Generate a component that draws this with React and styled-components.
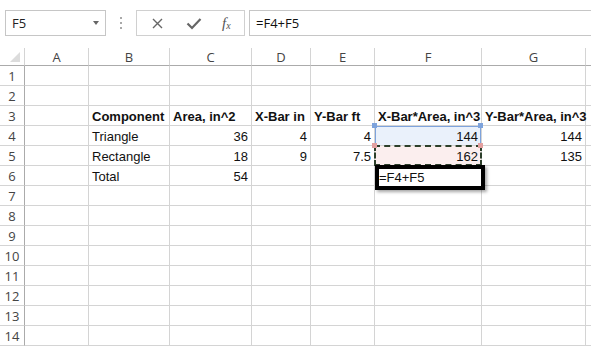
import React from "react";
import styled, { createGlobalStyle } from "styled-components";

const GlobalStyle = createGlobalStyle`
  html, body {
    margin: 0;
    padding: 0;
    background: #ffffff;
    overflow: hidden;
  }
  body {
    font-family: "Liberation Sans", Arial, sans-serif;
  }
`;

const COLS = [64, 81, 82, 59, 64, 107, 104];
const LETTERS = ["A", "B", "C", "D", "E", "F", "G"];

const rows = {
  3: [null, { t: "Component", b: true }, { t: "Area, in^2", b: true }, { t: "X-Bar in", b: true }, { t: "Y-Bar ft", b: true }, { t: "X-Bar*Area, in^3", b: true }, { t: "Y-Bar*Area, in^3", b: true }],
  4: [null, { t: "Triangle" }, { t: "36", r: true }, { t: "4", r: true }, { t: "4", r: true }, { t: "144", r: true, sel: "blue" }, { t: "144", r: true }],
  5: [null, { t: "Rectangle" }, { t: "18", r: true }, { t: "9", r: true }, { t: "7.5", r: true }, { t: "162", r: true, sel: "red" }, { t: "135", r: true }],
  6: [null, { t: "Total" }, { t: "54", r: true }, null, null, { edit: "=F4+F5" }, null],
};

export default function App() {
  const rowNums = Array.from({ length: 14 }, (_, i) => i + 1);
  return (
    <Page>
      <GlobalStyle />
      <FormulaBar>
        <NameBox>
          <span>F5</span>
          <DropArrow />
        </NameBox>
        <Grip>
          <i />
          <i />
          <i />
        </Grip>
        <ButtonBox>
          <BarButton>
            <svg width="13" height="13" viewBox="0 0 13 13">
              <path d="M2 2 L11 11 M11 2 L2 11" stroke="#666" strokeWidth="1.4" fill="none" />
            </svg>
          </BarButton>
          <BarButton>
            <svg width="16" height="13" viewBox="0 0 16 13">
              <path d="M1.5 6.5 L6 11 L14.5 2" stroke="#666" strokeWidth="2.2" fill="none" />
            </svg>
          </BarButton>
          <FxButton>
            f<sub>x</sub>
          </FxButton>
        </ButtonBox>
        <FormulaInput>=F4+F5</FormulaInput>
      </FormulaBar>

      <Sheet>
        <Corner>
          <svg width="10" height="10" viewBox="0 0 10 10">
            <path d="M10 0 L10 10 L0 10 Z" fill="#dcdcdc" />
          </svg>
        </Corner>
        {LETTERS.map((l) => (
          <ColHead key={l}>{l}</ColHead>
        ))}
        <ColHead $last />

        {rowNums.map((n) => (
          <React.Fragment key={n}>
            <RowHead>{n}</RowHead>
            {COLS.map((_, ci) => {
              const c = rows[n] ? rows[n][ci] : null;
              return (
                <Cell key={ci} $bold={c && c.b} $right={c && c.r} $sel={c && c.sel}>
                  {c && c.t}
                  {c && c.sel === "blue" && (
                    <>
                      <Handle $c="#7ea3dc" $top $left />
                      <Handle $c="#7ea3dc" $top />
                    </>
                  )}
                  {c && c.sel === "red" && (
                    <>
                      <Marquee />
                      <Handle $c="#e3a0a0" $top $left />
                      <Handle $c="#e3a0a0" $top />
                    </>
                  )}
                  {c && c.edit && <Editor>{c.edit}</Editor>}
                </Cell>
              );
            })}
            <Cell $last />
          </React.Fragment>
        ))}
      </Sheet>
    </Page>
  );
}

const Page = styled.div`
  width: 591px;
  height: 346px;
  overflow: hidden;
  background: #fff;
`;

const FormulaBar = styled.div`
  display: flex;
  align-items: stretch;
  height: 26px;
  padding: 10px 0 12px 5px;
`;

const NameBox = styled.div`
  width: 101px;
  border: 1px solid #c6c6c6;
  display: flex;
  align-items: center;
  justify-content: space-between;
  padding: 0 6px 0 6px;
  box-sizing: border-box;
  font-family: "Open Sans", "Liberation Sans", sans-serif;
  font-size: 13px;
  color: #222;
`;

const DropArrow = styled.div`
  width: 0;
  height: 0;
  border-left: 3.5px solid transparent;
  border-right: 3.5px solid transparent;
  border-top: 4px solid #666;
`;

const Grip = styled.div`
  width: 30px;
  display: flex;
  flex-direction: column;
  align-items: center;
  justify-content: center;
  gap: 3px;
  i {
    display: block;
    width: 2px;
    height: 2px;
    background: #a9a9a9;
  }
`;

const ButtonBox = styled.div`
  width: 109px;
  border: 1px solid #d0d0d0;
  box-sizing: border-box;
  display: flex;
  align-items: center;
  padding-left: 12px;
  gap: 0;
`;

const BarButton = styled.div`
  width: 33px;
  display: flex;
  align-items: center;
  justify-content: flex-start;
  padding-left: 2px;
`;

const FxButton = styled.div`
  font-family: "Liberation Serif", "Times New Roman", serif;
  font-style: italic;
  font-size: 15px;
  color: #555;
  margin-left: 3px;
  sub {
    font-size: 10px;
    vertical-align: -1px;
  }
`;

const FormulaInput = styled.div`
  flex: 1;
  margin-left: 4px;
  border-top: 1px solid #c6c6c6;
  border-bottom: 1px solid #c6c6c6;
  border-left: 1px solid #c6c6c6;
  display: flex;
  align-items: center;
  padding-left: 6px;
  font-family: "Open Sans", "Liberation Sans", sans-serif;
  font-size: 13px;
  color: #111;
`;

const Sheet = styled.div`
  display: grid;
  grid-template-columns: 25px ${COLS.map((c) => c + "px").join(" ")} 1fr;
  grid-template-rows: 18px repeat(14, 20px);
  font-family: "Liberation Sans", Arial, sans-serif;
  font-size: 13px;
  color: #111;
`;

const Corner = styled.div`
  border-right: 1px solid #d4d4d4;
  border-bottom: 1px solid #ababab;
  display: flex;
  align-items: flex-end;
  justify-content: flex-end;
  padding: 0 4px 3px 0;
`;

const ColHead = styled.div`
  border-right: ${(p) => (p.$last ? "none" : "1px solid #d4d4d4")};
  border-bottom: 1px solid #ababab;
  display: flex;
  align-items: center;
  justify-content: center;
  font-family: "Open Sans", "Liberation Sans", sans-serif;
  font-size: 13px;
  color: #444;
`;

const RowHead = styled.div`
  border-right: 1px solid #ababab;
  border-bottom: 1px solid #d4d4d4;
  display: flex;
  align-items: center;
  justify-content: center;
  font-family: "Open Sans", "Liberation Sans", sans-serif;
  font-size: 13px;
  color: #444;
`;

const selFill = { blue: "#eaf1fb", red: "#fbeeee" };

const Cell = styled.div`
  position: relative;
  border-right: ${(p) => (p.$last ? "none" : "1px solid #d4d4d4")};
  border-bottom: 1px solid #d4d4d4;
  display: flex;
  align-items: center;
  justify-content: ${(p) => (p.$right ? "flex-end" : "flex-start")};
  padding: 1px 3px 0 3px;
  white-space: nowrap;
  overflow: visible;
  font-weight: ${(p) => (p.$bold ? 700 : 400)};
  background: ${(p) => (p.$sel ? selFill[p.$sel] : "transparent")};
  ${(p) =>
    p.$sel === "blue" &&
    `
    box-shadow: inset 0 1px 0 #7ea3dc, inset 1px 0 0 #7ea3dc, inset -1px 0 0 #7ea3dc;
  `}
`;

const Handle = styled.span`
  position: absolute;
  width: 5px;
  height: 5px;
  background: ${(p) => p.$c};
  top: ${(p) => (p.$top ? "-3px" : "auto")};
  ${(p) => (p.$left ? "left: -3px;" : "right: -2px;")}
  z-index: 3;
`;

const Marquee = styled.span`
  position: absolute;
  left: -1px;
  top: -1px;
  right: -1px;
  bottom: -1px;
  border: 2px dashed #2c3f2a;
  pointer-events: none;
  z-index: 2;
`;

const Editor = styled.div`
  position: absolute;
  left: 0;
  top: -1px;
  width: 110px;
  height: 25px;
  box-sizing: border-box;
  border: 4px solid #000;
  background: #fff;
  box-shadow: 2px 2px 3px rgba(0, 0, 0, 0.35);
  display: flex;
  align-items: center;
  padding-left: 0;
  font-family: "Liberation Sans", Arial, sans-serif;
  font-size: 13px;
  color: #111;
  z-index: 4;
`;
